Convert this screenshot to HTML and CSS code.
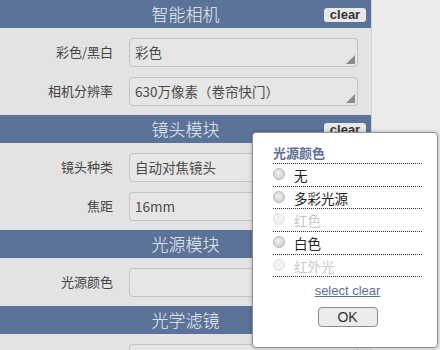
FILE: index.html
```html
<!DOCTYPE html>
<html lang="zh">
<head>
<meta charset="utf-8">
<link rel="stylesheet" href="styles.css">
</head>
<body>
<div class="panel">
  <section class="sec">
    <div class="sec-head">智能相机<span class="clear">clear</span></div>
    <div class="sec-body">
      <div class="row"><label class="lbl">彩色/黑白</label><div class="sel">彩色<i class="tri"></i></div></div>
      <div class="row"><label class="lbl">相机分辨率</label><div class="sel">630万像素（卷帘快门）<i class="tri"></i></div></div>
    </div>
  </section>
  <section class="sec">
    <div class="sec-head">镜头模块<span class="clear">clear</span></div>
    <div class="sec-body">
      <div class="row"><label class="lbl">镜头种类</label><div class="sel">自动对焦镜头<i class="tri"></i></div></div>
      <div class="row"><label class="lbl">焦距</label><div class="sel">16mm<i class="tri"></i></div></div>
    </div>
  </section>
  <section class="sec">
    <div class="sec-head">光源模块<span class="clear">clear</span></div>
    <div class="sec-body">
      <div class="row"><label class="lbl">光源颜色</label><div class="sel"></div></div>
    </div>
  </section>
  <section class="sec">
    <div class="sec-head">光学滤镜<span class="clear">clear</span></div>
    <div class="sec-body">
      <div class="row"><label class="lbl">滤镜</label><div class="sel"></div></div>
    </div>
  </section>
</div>

<div class="popup">
  <div class="pop-title">光源颜色</div>
  <ul class="opts">
    <li class="opt"><span class="radio"></span>无</li>
    <li class="opt"><span class="radio"></span>多彩光源</li>
    <li class="opt off"><span class="radio"></span>红色</li>
    <li class="opt"><span class="radio"></span>白色</li>
    <li class="opt off"><span class="radio"></span>红外光</li>
  </ul>
  <div class="pop-foot">
    <a class="sel-clear" href="#">select clear</a>
    <button class="ok">OK</button>
  </div>
</div>
</body>
</html>
```
FILE: styles.css
```css
* { box-sizing: border-box; }
html, body { margin: 0; padding: 0; }
body {
  width: 440px;
  height: 350px;
  overflow: hidden;
  background: #ececec;
  font-family: "Noto Sans CJK SC", "Noto Sans", sans-serif;
  position: relative;
}
.panel {
  width: 372px;
  background: #e3e3e3;
  border-right: 1px solid #d2d2d2;
}
.sec-head {
  position: relative;
  height: 28px;
  line-height: 28px;
  background: #5b7299;
  color: #eef0f6;
  font-size: 17px;
  font-weight: 300;
  text-align: center;
}
.clear {
  position: absolute;
  right: 5px;
  top: 8px;
  height: 14px;
  width: 42px;
  line-height: 14px;
  background: #e8e8e8;
  color: #333;
  font-family: "Liberation Sans", sans-serif;
  font-weight: bold;
  font-size: 13px;
  border-radius: 3px;
  text-align: center;
}
.sec-body {
  padding: 10px 0 9px;
  display: flex;
  flex-direction: column;
  gap: 10px;
}
.row {
  display: flex;
  align-items: center;
  height: 29px;
}
.lbl {
  width: 113px;
  text-align: right;
  font-size: 13px;
  color: #444;
  margin-top: -3px;
}
.sel {
  position: relative;
  margin-left: 16px;
  width: 229px;
  height: 29px;
  border: 1px solid #c4c4c4;
  border-radius: 4px;
  background: #e6e6e6;
  font-size: 13.5px;
  color: #4a4a4a;
  line-height: 27px;
  padding-left: 5px;
  white-space: nowrap;
}
.tri {
  position: absolute;
  right: 2px;
  bottom: 2px;
  width: 0;
  height: 0;
  border-left: 9px solid transparent;
  border-bottom: 9px solid #8a8a8a;
}
.popup {
  position: absolute;
  left: 252px;
  top: 132px;
  width: 186px;
  height: 216px;
  background: #fff;
  border: 1px solid #8f8f8f;
  border-radius: 4px;
  box-shadow: 0 0 4px rgba(0,0,0,0.25);
  padding: 10px 15px 0 20px;
  font-family: "Noto Sans CJK SC", "Noto Sans", sans-serif;
}
.pop-title {
  font-size: 13px;
  font-weight: bold;
  color: #5b6f96;
  height: 21px;
  line-height: 20px;
  border-bottom: 1px dotted #333;
}
.opts {
  list-style: none;
  margin: 0;
  padding: 0;
}
.opt {
  height: 22.7px;
  display: flex;
  align-items: center;
  border-bottom: 1px dotted #333;
  font-size: 13.5px;
  color: #222;
}
.opt.off { color: #c8c8c8; }
.radio {
  width: 12px;
  height: 12px;
  border-radius: 50%;
  border: 1px solid #b5b5b5;
  background: radial-gradient(circle at 45% 40%, #f0f0f0 0%, #d4d4d4 70%, #c4c4c4 100%);
  margin-right: 9px;
  margin-top: -2px;
}
.opt.off .radio {
  border-color: #e2e2e2;
  background: #f2f2f2;
}
.pop-foot {
  display: flex;
  flex-direction: column;
  align-items: center;
  padding-top: 6px;
}
.sel-clear {
  font-family: "Liberation Sans", sans-serif;
  font-size: 13px;
  color: #5b6f96;
  text-decoration: underline;
  line-height: 16px;
}
.ok {
  margin-top: 8px;
  width: 60px;
  height: 20px;
  padding: 0;
  border: 1px solid #8a8a8a;
  border-radius: 4px;
  background: #ececec;
  font-family: "Liberation Sans", sans-serif;
  font-size: 14px;
  color: #333;
  line-height: 18px;
}
```
